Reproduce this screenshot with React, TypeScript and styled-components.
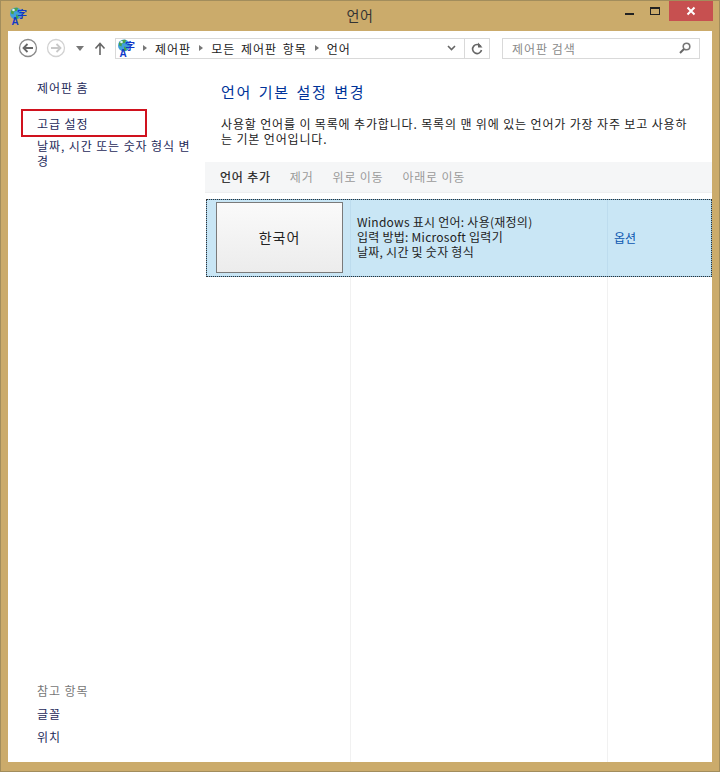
import React from "react";
import styled, { createGlobalStyle } from "styled-components";

const Global = createGlobalStyle`
  html, body { margin: 0; padding: 0; background: #cbab6b; }
  * { box-sizing: border-box; }
`;

const kr = `"Noto Sans CJK KR", "Noto Sans", sans-serif`;

const Win = styled.div`
  width: 720px;
  height: 772px;
  display: flex;
  flex-direction: column;
  background: #cbab6b;
  border: 1px solid #a28d5c;
  padding: 0 7px 9px 7px;
  font-family: ${kr};
  font-size: 12px;
  color: #1a1a1a;
  overflow: hidden;
`;
const TitleBar = styled.div`
  height: 30px;
  flex: none;
  position: relative;
  display: flex;
  align-items: center;
  justify-content: center;
  font-size: 14px;
  letter-spacing: 0.5px;
  color: #333;
  padding-bottom: 2px;
`;
const TitleIcon = styled.span`
  position: absolute;
  left: 1px;
  top: 6px;
  display: flex;
`;
const Caption = styled.div`
  position: absolute;
  right: -1px;
  top: 0;
  display: flex;
  height: 20px;
`;
const CapBtn = styled.div<{ $w: number; $close?: boolean }>`
  width: ${(p) => p.$w}px;
  height: 20px;
  display: flex;
  align-items: center;
  justify-content: center;
  background: ${(p) => (p.$close ? "#c75050" : "transparent")};
`;
const Content = styled.div`
  flex: 1;
  min-height: 0;
  background: #fff;
  display: flex;
  flex-direction: column;
`;
const Nav = styled.div`
  height: 33px;
  flex: none;
  display: flex;
  align-items: center;
  padding: 1px 12px 0 10px;
`;
const NavIcon = styled.span<{ $w: number }>`
  width: ${(p) => p.$w}px;
  display: flex;
  justify-content: center;
  flex: none;
`;
const Address = styled.div`
  width: 375px;
  height: 21px;
  margin-left: 1px;
  border: 1px solid #d9d9d9;
  display: flex;
  align-items: center;
  padding-left: 1px;
`;
const Crumb = styled.span`
  color: #222;
  margin: 0 0 0 8px;
  white-space: nowrap;
  letter-spacing: 1px;
  word-spacing: 2px;
`;
const Sep = styled.span`
  width: 0;
  height: 0;
  border-left: 4px solid #777;
  border-top: 3.5px solid transparent;
  border-bottom: 3.5px solid transparent;
  margin-left: 8px;
  flex: none;
`;
const Spacer = styled.span`
  flex: 1;
`;
const AddrBtn = styled.span<{ $line?: boolean }>`
  width: 25px;
  height: 100%;
  display: flex;
  align-items: center;
  justify-content: center;
  border-left: ${(p) => (p.$line ? "1px solid #d9d9d9" : "none")};
`;
const Search = styled.div`
  width: 198px;
  height: 21px;
  margin-left: 12px;
  border: 1px solid #d9d9d9;
  display: flex;
  align-items: center;
  justify-content: space-between;
  padding: 0 8px 0 9px;
  color: #8a8a8a;
  letter-spacing: 1px;
`;
const Body = styled.div`
  flex: 1;
  min-height: 0;
  display: flex;
`;
const Side = styled.aside`
  width: 197px;
  flex: none;
  display: flex;
  flex-direction: column;
  padding: 16px 12px 18px 29px;
  letter-spacing: 0.9px;
  word-break: break-all;
`;
const SideLink = styled.div`
  color: #1e2a5a;
  line-height: 15px;
`;
const BoxedLink = styled(SideLink)`
  width: 126px;
  height: 28px;
  margin: 14px 0 0 -16px;
  padding: 5px 0 0 14px;
  border: 2px solid #d0121e;
`;
const WrapLink = styled(SideLink)`
  margin-top: 1px;
`;
const SeeAlso = styled.div`
  margin-top: auto;
  display: flex;
  flex-direction: column;
  gap: 8px;
`;
const SeeTitle = styled.div`
  color: #777;
  line-height: 15px;
`;
const Main = styled.main`
  flex: 1;
  min-width: 0;
  display: flex;
  flex-direction: column;
`;
const Heading = styled.h1`
  margin: 17px 0 0 16px;
  font-size: 15px;
  line-height: 22px;
  font-weight: 400;
  color: #003399;
  letter-spacing: 1.6px;
  word-spacing: 2px;
`;
const Desc = styled.p`
  margin: 13px 18px 0 16px;
  line-height: 15px;
  color: #222;
  letter-spacing: 0.85px;
  word-break: break-all;
`;
const Toolbar = styled.div`
  margin-top: 16px;
  height: 31px;
  flex: none;
  background: #f5f6f7;
  border-bottom: 1px solid #eeeff0;
  display: flex;
  align-items: center;
  gap: 19px;
  padding: 0 0 2px 15px;
  letter-spacing: 0.8px;
`;
const Tool = styled.span<{ $off?: boolean }>`
  color: ${(p) => (p.$off ? "#9a9a9a" : "#222")};
  -webkit-text-stroke: ${(p) => (p.$off ? "0" : "0.2px")};
`;
const List = styled.div`
  flex: 1;
  min-height: 0;
  margin-top: 6px;
  display: flex;
  flex-direction: column;
`;
const Row = styled.div`
  height: 78px;
  flex: none;
  display: grid;
  grid-template-columns: 144px 257px 1fr;
  background: #c9e6f5;
  outline: 1px dotted #333;
  outline-offset: -1px;
  border: 1px solid #7db4d6;
  margin-left: 1px;
`;
const LangCell = styled.div`
  padding: 2px 0 3px 9px;
  border-right: 1px solid #bddcee;
  display: flex;
`;
const LangBtn = styled.div`
  width: 127px;
  height: 71px;
  border: 1px solid #7a7a7a;
  background: linear-gradient(#fafafa, #ececec);
  display: flex;
  align-items: center;
  justify-content: center;
  padding-bottom: 2px;
  font-size: 14px;
  letter-spacing: 1px;
  color: #222;
`;
const Info = styled.div`
  padding: 0 0 3px 6px;
  border-right: 1px solid #bddcee;
  display: flex;
  flex-direction: column;
  justify-content: center;
  line-height: 15px;
  color: #222;
  letter-spacing: 0.25px;
`;
const Opt = styled.div`
  display: flex;
  align-items: center;
  padding: 0 0 2px 6px;
  color: #0a56b0;
`;
const Rest = styled.div`
  flex: 1;
  display: grid;
  grid-template-columns: 146px 257px 1fr;
`;
const RestCol = styled.div`
  border-right: 1px solid #f1f1f1;
  &:last-child {
    border-right: none;
  }
`;
const GlobeSvg = styled.svg`
  display: block;
  flex: none;
  margin-bottom: -4px;
`;

const Globe = () => (
  <GlobeSvg width="18" height="22" viewBox="0 0 18 22">
    <circle cx="7" cy="6.500" r="6" fill="#3fa0dc" />
    <path d="M2 4c2-3 5-3.500 7-3l-1 3-3 .5-.5 3-2.500-1zM7 7.500l3 .5-1 3.500-2 .5z" fill="#49a34a" />
    <circle cx="4.500" cy="3" r="1.300" fill="#d6eefc" />
    <text x="8" y="11" fontSize="10" fill="#1238c8" fontFamily="Noto Sans CJK SC, sans-serif" fontWeight="700">字</text>
    <text x="2.500" y="18" fontSize="10" fill="#1238c8" fontFamily="Liberation Sans, sans-serif" fontWeight="700">A</text>
  </GlobeSvg>
);

export default function App() {
  return (
    <Win>
      <Global />
      <TitleBar>
        <TitleIcon><Globe /></TitleIcon>
        언어
        <Caption>
          <CapBtn $w={26}>
            <svg width="9" height="9" viewBox="0 0 9 9"><rect x="0" y="6" width="9" height="2" fill="#222" /></svg>
          </CapBtn>
          <CapBtn $w={27}>
            <svg width="11" height="9" viewBox="0 0 11 9"><rect x=".5" y=".5" width="9" height="7" fill="none" stroke="#222" /><rect x="0" y="0" width="10" height="2" fill="#222" /></svg>
          </CapBtn>
          <CapBtn $w={44} $close>
            <svg width="10" height="10" viewBox="0 0 10 10"><path d="M1.500 1.500l7 7M8.500 1.500l-7 7" stroke="#fff" strokeWidth="2" /></svg>
          </CapBtn>
        </Caption>
      </TitleBar>
      <Content>
        <Nav>
          <NavIcon $w={20}>
            <svg width="20" height="20" viewBox="0 0 20 20"><circle cx="10" cy="10" r="8.500" fill="#fff" stroke="#8a8a8a" strokeWidth="1.300" /><path d="M15 10H6M9.500 6l-4 4 4 4" fill="none" stroke="#666" strokeWidth="1.800" /></svg>
          </NavIcon>
          <NavIcon $w={36}>
            <svg width="20" height="20" viewBox="0 0 20 20"><circle cx="10" cy="10" r="8.500" fill="#fff" stroke="#d2d2d2" strokeWidth="1.300" /><path d="M5 10h9M10.500 6l4 4-4 4" fill="none" stroke="#c8c8c8" strokeWidth="1.800" /></svg>
          </NavIcon>
          <NavIcon $w={12}>
            <svg width="8" height="5" viewBox="0 0 8 5"><path d="M0 0h8L4 5z" fill="#777" /></svg>
          </NavIcon>
          <NavIcon $w={28}>
            <svg width="12" height="13" viewBox="0 0 12 13"><path d="M6 13V2M1.500 6.500L6 1.500l4.500 5" fill="none" stroke="#666" strokeWidth="1.600" /></svg>
          </NavIcon>
          <Address>
            <Globe />
            <Sep /><Crumb>제어판</Crumb>
            <Sep /><Crumb>모든 제어판 항목</Crumb>
            <Sep /><Crumb>언어</Crumb>
            <Spacer />
            <AddrBtn>
              <svg width="9" height="6" viewBox="0 0 9 6"><path d="M1 1l3.500 3.500L8 1" fill="none" stroke="#666" strokeWidth="1.600" /></svg>
            </AddrBtn>
            <AddrBtn $line>
              <svg width="12" height="13" viewBox="0 0 12 13"><path d="M9.800 4.500A4.500 4.500 0 1 0 10.500 8" fill="none" stroke="#666" strokeWidth="1.600" /><path d="M7 .5v5h4.500z" fill="#666" /></svg>
            </AddrBtn>
          </Address>
          <Search>
            제어판 검색
            <svg width="12" height="12" viewBox="0 0 12 12"><circle cx="7.500" cy="4.500" r="3.300" fill="none" stroke="#777" strokeWidth="1.600" /><path d="M5 7l-4 4" stroke="#666" strokeWidth="2" /></svg>
          </Search>
        </Nav>
        <Body>
          <Side>
            <SideLink>제어판 홈</SideLink>
            <BoxedLink>고급 설정</BoxedLink>
            <WrapLink>날짜, 시간 또는 숫자 형식 변경</WrapLink>
            <SeeAlso>
              <SeeTitle>참고 항목</SeeTitle>
              <SideLink>글꼴</SideLink>
              <SideLink>위치</SideLink>
            </SeeAlso>
          </Side>
          <Main>
            <Heading>언어 기본 설정 변경</Heading>
            <Desc>사용할 언어를 이 목록에 추가합니다. 목록의 맨 위에 있는 언어가 가장 자주 보고 사용하는 기본 언어입니다.</Desc>
            <Toolbar>
              <Tool>언어 추가</Tool>
              <Tool $off>제거</Tool>
              <Tool $off>위로 이동</Tool>
              <Tool $off>아래로 이동</Tool>
            </Toolbar>
            <List>
              <Row>
                <LangCell><LangBtn>한국어</LangBtn></LangCell>
                <Info>
                  <div>Windows 표시 언어: 사용(재정의)</div>
                  <div>입력 방법: Microsoft 입력기</div>
                  <div>날짜, 시간 및 숫자 형식</div>
                </Info>
                <Opt>옵션</Opt>
              </Row>
              <Rest>
                <RestCol />
                <RestCol />
                <RestCol />
              </Rest>
            </List>
          </Main>
        </Body>
      </Content>
    </Win>
  );
}
